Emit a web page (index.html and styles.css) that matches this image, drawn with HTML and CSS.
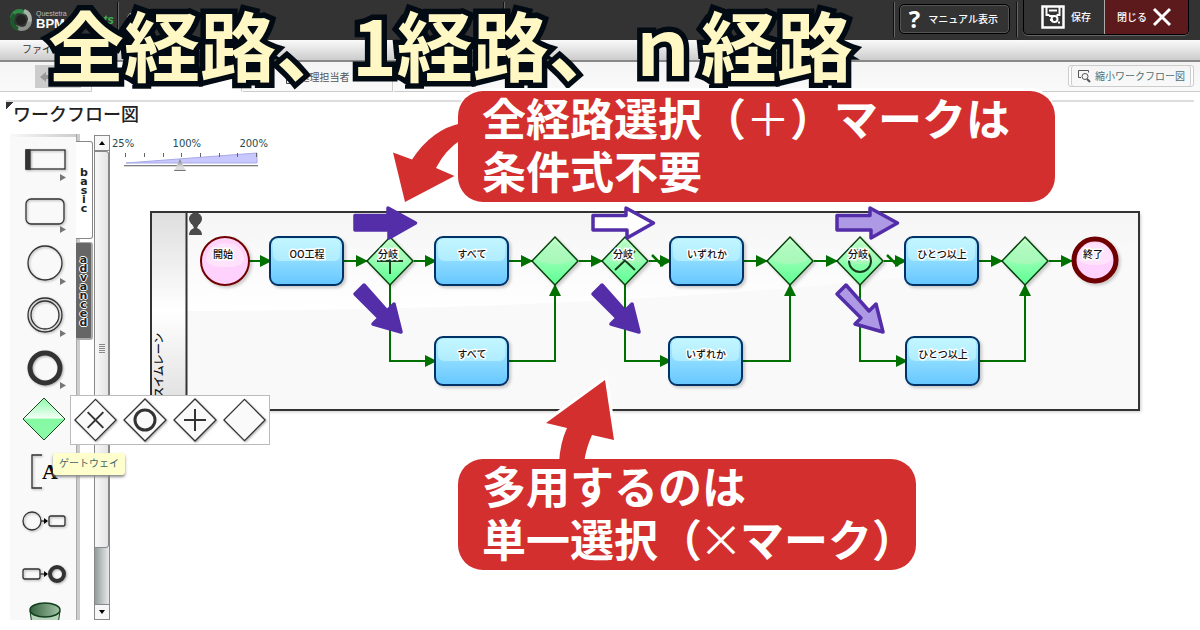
FILE: index.html
```html
<!DOCTYPE html>
<html lang="ja">
<head>
<meta charset="utf-8">
<title>全経路、1経路、ｎ経路</title>
<link rel="stylesheet" href="styles.css">
</head>
<body>
<div class="app">
  <header class="topbar">
    <a class="brand" href="#" aria-label="Questetra BPM Suite">
      <svg class="brand-mark" width="24" height="24" viewBox="0 0 24 24" aria-hidden="true">
        <g fill="none" stroke-width="4">
          <path d="M3 10 Q4 3 11 3 L18 5" stroke="#2e8b45"/>
          <path d="M15 3 Q21 5 21 12 L19 18" stroke="#aab0aa"/>
          <path d="M21 14 Q19 21 12 21 L6 19" stroke="#8c918c"/>
          <path d="M9 21 Q3 19 3 12 L5 6" stroke="#1c5a2c"/>
        </g>
        <circle cx="12" cy="12" r="5" fill="#222"/>
      </svg>
      <span class="brand-text"><small>Questetra</small>BPM Suite</span>
      <em>ts</em>
    </a>
    <span class="rule"></span>
    <span class="mark-dot"></span>
    <span class="rule rule-far"></span>
    <span class="grow"></span>
    <span class="rule"></span>
    <button class="manual" type="button"><b>?</b>マニュアル表示</button>
    <span class="rule"></span>
    <div class="actions">
      <button class="save" type="button">
        <svg width="24" height="24" viewBox="0 0 24 24" aria-hidden="true" fill="none" stroke="#fff">
          <path d="M1.500 1.500h21v21h-21z" stroke-width="2.500"/>
          <path d="M5.500 2v8h3M18.500 2v8h-3" stroke-width="2"/>
          <path d="M8 5.500h8" stroke-width="2"/>
          <path d="M8 11h6M9 15h3" stroke-width="2"/>
          <circle cx="13.500" cy="14" r="3" stroke-width="2"/>
          <path d="M17 17.500h2" stroke-width="2"/>
        </svg>保存</button>
      <button class="close" type="button">閉じる
        <svg width="20" height="20" viewBox="0 0 20 20" aria-hidden="true"><path d="M2 2l16 16M18 2L2 18" stroke="#fff" stroke-width="3"/></svg>
      </button>
    </div>
  </header>

  <nav class="menubar"><a href="#">ファイル</a></nav>

  <div class="tabs">
    <button class="back" type="button" aria-label="戻る"><svg width="12" height="12" viewBox="0 0 12 12"><path d="M0 6l6-5v3h6v4H6v3z" fill="#999"/></svg></button>
    <button class="tab active" type="button"><i class="tab-icon"></i></button>
    <button class="tab" type="button"><i class="tab-icon person"></i>処理担当者</button>
    <button class="tab" type="button"><i class="tab-icon"></i></button>
    <span class="tab-fill"><button class="mini" type="button">
      <svg width="14" height="14" viewBox="0 0 14 14" fill="none" stroke="#555" aria-hidden="true"><path d="M4 8.500H1.500v-7h10v2"/><circle cx="8" cy="7.500" r="3"/><path d="M10 10l3 3" stroke-width="2"/></svg>縮小ワークフロー図</button></span>
  </div>

  <main class="panel">
    <h1 class="panel-title">ワークフロー図</h1>
    <div class="workspace">
      <aside class="palette">
        <button type="button" aria-label="プール"><svg viewBox="-28 -26 56 52"><g class="ink"><rect x="-19" y="-10" width="39" height="19"/><rect x="-19" y="-10" width="4" height="19" fill="#333"/></g><path class="more" d="M15 14v7l6-3.500z"/></svg></button>
        <button type="button" aria-label="タスク"><svg viewBox="-28 -26 56 52"><rect class="ink" x="-19" y="-13" width="38" height="25" rx="5"/><path class="more" d="M15 14v7l6-3.500z"/></svg></button>
        <button type="button" aria-label="開始イベント"><svg viewBox="-28 -26 56 52"><circle class="ink" cy="-1" r="17"/><path class="more" d="M15 14v7l6-3.500z"/></svg></button>
        <button type="button" aria-label="中間イベント"><svg viewBox="-28 -26 56 52"><g class="ink"><circle cy="-1" r="17"/><circle cy="-1" r="14"/></g><path class="more" d="M15 14v7l6-3.500z"/></svg></button>
        <button type="button" aria-label="終了イベント"><svg viewBox="-28 -26 56 52"><circle class="ink thick" r="15" cy="0"/><path class="more" d="M15 14v7l6-3.500z"/></svg></button>
        <button type="button" aria-label="ゲートウェイ"><svg viewBox="-28 -26 56 52"><path d="M-1-22L20-1-1 20-22-1z" fill="url(#gwPick)" stroke="#164a1c"/></svg></button>
        <button type="button" aria-label="注釈"><svg viewBox="-28 -26 56 52"><path class="ink" d="M-3-17h-10v33h10"/><text class="note-a" x="-3" y="7">A</text></svg></button>
        <button type="button" aria-label="開始接続"><svg viewBox="-28 -26 56 52"><g class="ink"><circle cx="-13" cy="-3" r="9"/><rect x="4" y="-8" width="16" height="10" rx="2"/><path d="M-4-3h6"/></g><path d="M-1-6l4 3-4 3z"/></svg></button>
        <button type="button" aria-label="終了接続"><svg viewBox="-28 -26 56 52"><g class="ink"><rect x="-22" y="-7" width="17" height="10" rx="2"/><path d="M-5-2h6"/><circle class="mid" cx="12" cy="-2" r="7"/></g><path d="M-1-5l4 3-4 3z"/></svg></button>
        <button type="button" aria-label="データ"><svg viewBox="-28 -26 56 52"><path d="M-15-17L-11 10H11L15-17" fill="#b9d4bd" stroke="#123f1b"/><ellipse cy="-18" rx="15" ry="7" fill="url(#barrel)" stroke="#123f1b" stroke-width="1.500"/></svg></button>
      </aside>
      <div class="side-tabs">
        <button class="side-tab" type="button"><span>basic</span></button>
        <button class="side-tab dark" type="button"><span>advanced</span></button>
      </div>
      <div class="scroller">
        <button type="button" aria-label="上へ"><svg width="8" height="6" viewBox="0 0 8 6"><path d="M1 5l3-4 3 4z"/></svg></button>
        <div class="thumb"><i></i></div>
        <div class="track"></div>
        <button type="button" aria-label="下へ"><svg width="8" height="6" viewBox="0 0 8 6"><path d="M1 1l3 4 3-4z"/></svg></button>
      </div>

      <div class="canvas">
        <div class="zoomer">
          <div class="zoom-labels"><span>25%</span><span>100%</span><span>200%</span></div>
          <svg class="wedge" width="134" height="12" viewBox="0 0 134 12" aria-hidden="true">
            <path d="M1 11L132 1V11z" fill="#c8c8ff" stroke="#a9a9e8"/>
            <path d="M.5 1v4M19.500 1v4M38.500 1v4M56.500 1v4M75.500 1v4M94.500 1v4M112.500 1v4M131.500 1v4" stroke="#666"/>
          </svg>
          <input class="zoom-range" type="range" min="0" max="100" value="41" aria-label="表示倍率">
        </div>
        <svg class="diagram" width="1060" height="220" viewBox="140 200 1060 220">
          <defs>
            <linearGradient id="gwPick" x2="0" y2="1"><stop offset="0" stop-color="#8dfaaa"/><stop offset=".48" stop-color="#f2fff5"/><stop offset=".5" stop-color="#85f9a2"/><stop offset="1" stop-color="#8dfaaa"/></linearGradient>
            <linearGradient id="barrel"><stop offset="0" stop-color="#35633d"/><stop offset="1" stop-color="#a3c4a8"/></linearGradient>
            <linearGradient id="lane" x2="0" y2="1"><stop offset="0" stop-color="#dedede"/><stop offset=".5" stop-color="#fff"/><stop offset="1" stop-color="#dedede"/></linearGradient>
            <linearGradient id="sheen" x2="0" y2="1"><stop offset="0" stop-color="#f5f5f5"/><stop offset="1" stop-color="#fff"/></linearGradient>
            <linearGradient id="blue" x2="0" y2="1"><stop offset="0" stop-color="#b3efff"/><stop offset="1" stop-color="#66c7ff"/></linearGradient>
            <linearGradient id="blueTop" x2="0" y2="1"><stop offset="0" stop-color="#c2f6ff"/><stop offset="1" stop-color="#b0ecff"/></linearGradient>
            <linearGradient id="green" x2="0" y2="1"><stop offset="0" stop-color="#c9ffcf"/><stop offset="1" stop-color="#5cff93"/></linearGradient>
            <linearGradient id="pink" x2="0" y2="1"><stop offset="0" stop-color="#ffd2f8"/><stop offset="1" stop-color="#ffd2ff"/></linearGradient>
            <filter id="soft" x="-20%" y="-20%" width="150%" height="150%"><feDropShadow dx="2" dy="2" stdDeviation="1.500" flood-opacity=".2"/></filter>
            <marker id="head" viewBox="0 0 13 14" refX="11" refY="7" markerWidth="13" markerHeight="14" markerUnits="userSpaceOnUse" orient="auto"><path d="M0 1L12 7 0 13z" fill="#007000"/></marker>
            <g id="task"><rect x="1" y="1" width="73" height="48" rx="8" fill="url(#blue)" stroke="#003266" stroke-width="2" filter="url(#soft)"/><path d="M4 8Q4 3 9 3H66Q71 3 71 8V20Q71 25 64 25H11Q4 25 4 18z" fill="url(#blueTop)"/></g>
            <g id="gate"><path d="M0-24L23 0 0 24-23 0z" fill="url(#green)" stroke="#073f0b" stroke-width="1.500" filter="url(#soft)"/><path d="M0-19L18-1Q0 7-18-1z" fill="#b2f7bd" opacity=".7"/></g>
          </defs>
          <rect x="151" y="212" width="988" height="198" fill="#f9f9f9" filter="url(#soft)"/>
          <path d="M187 212H1139V245Q760 310 187 311z" fill="url(#sheen)"/>
          <rect x="152" y="213" width="34" height="196" fill="url(#lane)"/>
          <path d="M186.500 212v198" stroke="#333" stroke-width="2"/>
          <text class="lane-name" transform="translate(163 398) rotate(-90)">スイムレーン</text>
          <rect x="151" y="212" width="988" height="198" fill="none" stroke="#333" stroke-width="2"/>
          <g fill="#4a4a4a"><circle cx="195.500" cy="219" r="6.500"/><path d="M192 224h7l-2 4q5 2 5 7h-13q0-5 5-7z"/></g>

          <g fill="none" stroke="#007000" stroke-width="2" marker-end="url(#head)">
            <path d="M249 261H271"/><path d="M344 261H367"/><path d="M414 261H436"/><path d="M509 261H532"/>
            <path d="M579 261H602"/><path d="M649 261H671"/><path d="M744 261H767"/><path d="M814 261H837"/>
            <path d="M884 261H906"/><path d="M979 261H1002"/><path d="M1049 261H1072"/>
            <path d="M390 285V361H436"/><path d="M509 361H555V285"/>
            <path d="M625 285V361H671"/><path d="M743 361H790V285"/>
            <path d="M860 285V361H907"/><path d="M980 361H1025V285"/>
          </g>
          <path d="M652 255l11 11M887 255l11 11" stroke="#007000" stroke-width="2.500"/>

          <circle cx="225" cy="261" r="24" fill="url(#pink)" stroke="#700000" stroke-width="2" filter="url(#soft)"/>
          <path d="M206 259Q208 243 225 243T244 259Q243 267 225 267T206 259z" fill="#ffe3fc"/>
          <circle cx="1095" cy="260" r="21" fill="url(#pink)" stroke="#700000" stroke-width="5" filter="url(#soft)"/>
          <path d="M1078 258Q1080 243 1095 243T1112 258Q1110 265 1095 265T1078 258z" fill="#ffe3fc"/>
          <use href="#task" x="269" y="236"/><use href="#task" x="434" y="236"/><use href="#task" x="669" y="236"/><use href="#task" x="904" y="236"/>
          <use href="#task" x="434" y="336"/><use href="#task" x="668" y="336"/><use href="#task" x="905" y="336"/>
          <use href="#gate" x="390" y="261"/><use href="#gate" x="555" y="261"/><use href="#gate" x="625" y="261"/><use href="#gate" x="790" y="261"/><use href="#gate" x="860" y="261"/><use href="#gate" x="1025" y="261"/>
          <g fill="none" stroke="#173d1d" stroke-width="2"><path d="M377 261H403M390 248V274"/><path d="M615 251l20 19M635 251l-20 19"/><circle cx="860" cy="261" r="11"/></g>
          <g class="labels">
            <text x="223" y="258">開始</text><text x="307" y="258">OO工程</text><text x="388" y="258">分岐</text><text x="472" y="258">すべて</text>
            <text x="623" y="258">分岐</text><text x="707" y="258">いずれか</text><text x="858" y="258">分岐</text><text x="942" y="258">ひとつ以上</text><text x="1093" y="258">終了</text>
            <text x="472" y="358">すべて</text><text x="706" y="358">いずれか</text><text x="943" y="358">ひとつ以上</text>
          </g>
        </svg>
      </div>
    </div>
  </main>

  <div class="flyout">
    <button type="button" aria-label="排他"><svg viewBox="-25 -24 50 48"><path class="ink" d="M0-21L21 0 0 21-21 0z"/><path d="M-8-8L8 8M8-8L-8 8"/></svg></button>
    <button type="button" aria-label="包含"><svg viewBox="-25 -24 50 48"><path class="ink" d="M0-21L21 0 0 21-21 0z"/><circle r="10"/></svg></button>
    <button type="button" aria-label="並列"><svg viewBox="-25 -24 50 48"><path class="ink" d="M0-21L21 0 0 21-21 0z"/><path d="M-11 0H11M0-11V11"/></svg></button>
    <button type="button" aria-label="合流"><svg viewBox="-25 -24 50 48"><path class="ink" d="M0-21L21 0 0 21-21 0z"/></svg></button>
  </div>
  <div class="tip" role="tooltip">ゲートウェイ</div>

  <svg class="pointers" width="1200" height="630" viewBox="0 0 1200 630" aria-hidden="true">
    <defs>
      <path id="across" d="M355 215.500H388V208L415.500 223 389 238V230H355z"/>
      <path id="down" d="M364 285L387 311 394 304 401 332 373 324 379 318 355 294z"/>
    </defs>
    <g stroke="#532ea8" stroke-width="3.500" stroke-linejoin="round">
      <use href="#across" fill="#532ea8"/><use href="#across" x="238" fill="#fff"/><use href="#across" x="482" fill="#ae99e5"/>
      <use href="#down" fill="#532ea8"/><use href="#down" x="238" fill="#532ea8"/><use href="#down" x="482" fill="#ae99e5"/>
    </g>
    <g class="red-arrow">
      <path d="M405 202L393 152.500 412 159.500Q432 129 462 123V139Q445 150 436 168L454.500 176z"/>
      <path d="M605 380L546 423 567 428Q560 443 559 463H584Q586 448 592 435L614 440z"/>
    </g>
  </svg>
  <h2 class="headline">全経路、1経路、ｎ経路</h2>
  <p class="callout callout-all">全経路選択（<span class="thin">＋</span>）マークは<br>条件式不要</p>
  <p class="callout callout-one">多用するのは<br>単一選択（<span class="thin cross">×</span>マーク）</p>
</div>
</body>
</html>
```
FILE: styles.css
```css
* { box-sizing: border-box; }
body {
  margin: 0;
  background: #fff;
  color: #333;
  font: 10px/16px "Noto Sans CJK JP", sans-serif;
}
button { margin: 0; padding: 0; border: 0; background: none; color: inherit; font: inherit; }
a { color: inherit; text-decoration: none; }
svg { display: block; }

.app { position: relative; display: flex; flex-direction: column; height: 100vh; overflow: hidden; padding-bottom: 10px; }

/* Top bar */
.topbar { display: flex; flex: none; height: 40px; padding: 0 11px 0 9px; background: #333; color: #fff; }
.brand { display: flex; align-items: center; gap: 3px; width: 108px; }
.brand-text { font: bold 13px/13px "Liberation Sans", sans-serif; white-space: nowrap; }
.brand-text small { display: block; color: #bbb; font-size: 7px; font-weight: normal; line-height: 7px; }
.brand em { color: #3fae4c; font: italic bold 12px "Liberation Sans", sans-serif; }
.rule { flex: none; width: 2px; height: 35px; margin-top: 2px; background: #111; border-right: 1px solid #666; }
.rule-far { margin-left: 370px; }
.mark-dot { width: 14px; height: 14px; margin: 12px -8px 0 8px; border: 3px solid #eee; border-radius: 50%; }
.grow { flex: 1; }
.manual {
  display: flex; align-items: center; gap: 8px; height: 30px; margin: 4px 6px 0 4px; padding: 0 11px 0 9px;
  border: 1px solid #000; border-radius: 5px; box-shadow: inset 0 0 0 1px #555; font-size: 10px; font-weight: 500; white-space: nowrap;
}
.manual b { font: bold 24px/28px "Open Sans", sans-serif; }
.actions { display: flex; height: 35px; margin-left: 5px; border: 1px solid #000; border-top: 0; border-radius: 0 0 5px 5px; box-shadow: 0 1px 0 #666; overflow: hidden; font-weight: 500; }
.save, .close { display: flex; align-items: center; white-space: nowrap; }
.save { gap: 6px; padding: 0 13px 0 17px; border-right: 1px solid #aaa; }
.close { gap: 5px; padding: 0 16px 0 12px; background: #5c1a1c; }

.menubar { flex: none; height: 22px; padding-left: 22px; background: linear-gradient(#fafafa, #ccc); border-bottom: 2px solid #888; line-height: 18px; }

/* Tabs */
.tabs { display: flex; flex: none; height: 30px; background: linear-gradient(#f4f4f4, #fafafa); }
.back { display: flex; align-items: center; width: 92px; padding-left: 40px; border: 1px solid #ccc; border-width: 0 1px 1px 0; background: linear-gradient(#ccc, #ccc) 35px 3px / 46px 23px no-repeat; }
.tab { display: flex; align-items: center; justify-content: center; gap: 6px; width: 150px; padding: 0; border: 1px solid #ccc; border-width: 0 1px 1px 0; margin-right: 1px; color: #555; }
.tab.active { background: #fff; border-bottom-color: #fff; }
.tab-icon { width: 8px; height: 8px; margin-top: 6px; border: 1px solid #444; }
.tab-icon.person { border-radius: 4px 4px 0 0; }
.tab.active .tab-icon, .tab:nth-of-type(4) .tab-icon { margin-right: 56px; }
.tab-fill { display: flex; flex: 1; justify-content: flex-end; padding: 3px 6px 4px; border-bottom: 1px solid #ccc; }
.mini { display: flex; align-items: center; gap: 4px; padding: 0 8px; border: 1px solid #ccc; border-radius: 3px; box-shadow: inset 2px 0 #fff, inset -2px 0 #fff, inset 3px 0 #ccc, inset -3px 0 #ccc; color: #4e7075; }

/* Work area */
.panel { display: flex; flex: 1; flex-direction: column; min-height: 0; padding-top: 8px; }
.panel-title {
  flex: none; margin: 0 6px; padding-left: 7px; height: 34px; border-top: 2px solid #ddd;
  background: linear-gradient(135deg, #333 5px, transparent 5px) 0 0 / 8px 8px no-repeat;
  color: #222; font-size: 18px; font-weight: 500; line-height: 22px;
}
.workspace { display: flex; flex: 1; min-height: 0; }
.palette { flex: none; width: 66px; margin-left: 10px; background: linear-gradient(90deg, transparent, #ccc) 0 0 / 100% 3px no-repeat, #f9f9f9; overflow: hidden; }
.palette button { display: block; width: 56px; height: 52px; margin-left: 7px; }
.ink { fill: none; stroke: #333; stroke-width: 1.3px; filter: drop-shadow(1px 1px 1px #aaa); }
.ink.thick { stroke-width: 5px; }
.ink .mid { stroke-width: 4px; }
.more { fill: #777; }
.note-a { font: bold 22px "Liberation Serif", serif; }

.side-tabs { display: flex; flex: none; flex-direction: column; gap: 3px; width: 17px; padding-top: 7px; background: linear-gradient(90deg, #aaa 1px, #ccc 1px 4px, transparent 4px); }
.side-tab { display: flex; justify-content: center; align-items: center; width: 17px; height: 98px; border: 1px solid #888; border-left: 0; background: #fff; border-radius: 0 3px 3px 0; }
.side-tab span { width: 9px; color: #222; font: bold 11px/9px "DejaVu Sans", sans-serif; text-align: center; word-break: break-all; }
.side-tab.dark { background: #666; border: 2px solid #aaa; border-width: 1px 2px 2px 0; }
.side-tab.dark span { text-shadow: 1px 0 #fff, -1px 0 #fff, 0 1px #fff, 0 -1px #fff; }

.scroller { display: flex; flex: none; flex-direction: column; width: 16px; margin: 1px 0 0 1px; border: 1px solid #888; }
.scroller button { display: grid; flex: none; place-items: center; height: 15px; background: #f7f7f7; border-bottom: 1px solid #888; }
.scroller button:last-child { border: 0; border-top: 1px solid #888; }
.thumb { display: grid; flex: 7; place-items: center; border: 1px solid #888; border-left: 0; border-radius: 0 3px 3px 0; background: linear-gradient(90deg, #f8f8f8, #e5e5e5); }
.thumb i { width: 6px; height: 10px; background: repeating-linear-gradient(#888 0 1px, #eee 1px 2px); }
.track { flex: 1; background: linear-gradient(90deg, #939b9b, #e8eaea); }

.canvas { flex: 1; min-width: 0; overflow: hidden; }
.zoomer { width: 160px; height: 66px; padding: 1px 0 0 2px; }
.zoom-labels { display: flex; justify-content: space-between; width: 156px; color: #264a50; font: 10px/17px "DejaVu Sans", sans-serif; }
.wedge { margin-left: 13px; }
.zoom-range { appearance: none; display: block; width: 134px; height: 14px; margin: -6px 0 0 12px; background: linear-gradient(#555, #fff) 0 7px / 100% 2px no-repeat; }
.zoom-range::-webkit-slider-thumb { appearance: none; width: 12px; height: 12px; background: linear-gradient(63deg, #777 1px, transparent 1px), linear-gradient(#777, #ddd 8px 11px, #777 11px); clip-path: polygon(50% 0, 100% 100%, 0 100%); }
.diagram { margin-left: 30px; }
.labels text, .lane-name { font: 500 10px "Noto Sans CJK JP", sans-serif; fill: #111; }
.labels text { text-anchor: middle; stroke: #fff; stroke-width: 3px; stroke-linejoin: round; paint-order: stroke; }
.lane-name { font-size: 11px; }

/* Gateway menu */
.flyout { position: absolute; left: 70px; top: 395px; display: flex; border: 1px solid #bbb; background: #fff; }
.flyout button { width: 50px; height: 48px; }
.flyout button:first-child, .flyout button:last-child { width: 49px; }
.flyout svg { width: 100%; height: 48px; fill: none; stroke: #333; stroke-width: 2px; }
.flyout circle { stroke-width: 3px; }
.flyout .ink { fill: #fafafa; }
.tip { position: absolute; left: 53px; top: 453px; padding: 2px 6px 4px; border-radius: 3px; background: #ffffce; box-shadow: 0 2px 3px #888; color: #46646a; }

/* Annotations over the editor */
.pointers { position: absolute; left: 0; top: 0; pointer-events: none; }
.red-arrow { fill: #d32f2f; stroke: #fff; stroke-width: 6px; paint-order: stroke; }
.headline {
  position: absolute; left: 48px; top: 0; margin: 0; color: #fff8c4; font-size: 76px; font-weight: 700; line-height: 86px; white-space: nowrap;
  -webkit-text-stroke: 11px #020b13; paint-order: stroke fill; stroke-linejoin: round;
}
.callout { position: absolute; left: 458px; margin: 0; padding: 0 20px 5px 24px; border-radius: 25px; background: #d32f2f; color: #fff; font-size: 44px; font-weight: 700; line-height: 53px; white-space: nowrap; }
.callout-all { top: 91px; padding-right: 45px; box-shadow: 0 -3px 0 #fff; }
.callout-one { top: 459px; padding-right: 0; }
.callout .thin { font-weight: 400; }
.callout .cross { margin: 0 -3px; }
```
